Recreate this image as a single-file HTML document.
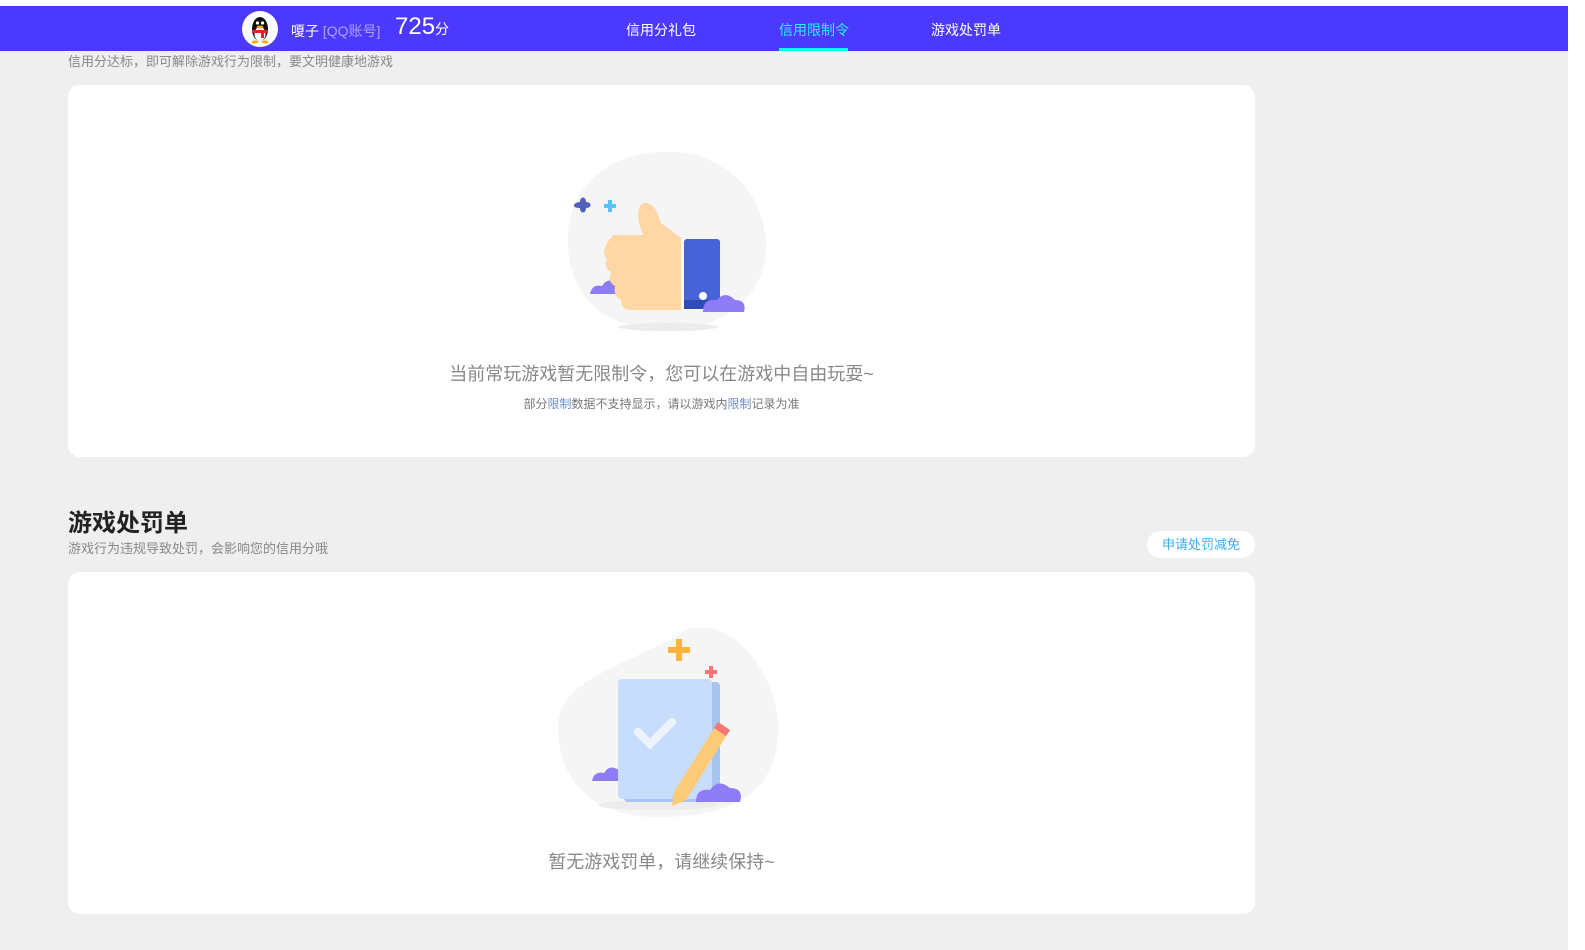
<!DOCTYPE html>
<html><head><meta charset="utf-8"><style>
*{margin:0;padding:0;box-sizing:border-box}
body{width:1585px;height:950px;background:#efefef;font-family:"Liberation Sans","Noto Sans CJK SC",sans-serif;position:relative;overflow:hidden}
.top{position:absolute;left:0;top:0;width:1585px;height:6px;background:#fff}
.rs{position:absolute;right:0;top:0;width:17px;height:950px;background:#fff}
.bar{position:absolute;left:0;top:6px;width:1568px;height:45px;background:#4b39fd;color:#fff}
.abs{position:absolute;white-space:nowrap}
.card{position:absolute;left:68px;width:1187px;background:#fff;border-radius:12px}
</style></head><body>
<div class="top"></div><div class="rs"></div>
<div class="bar">
 <div class="abs" style="left:242px;top:5px;width:36px;height:36px;border-radius:50%;background:#fff">
  <svg width="36" height="36" viewBox="0 0 36 36"><ellipse cx="18" cy="18" rx="8" ry="12" fill="#111"/><ellipse cx="18" cy="23" rx="5.5" ry="7" fill="#fff"/><circle cx="15.5" cy="12" r="1.6" fill="#fff"/><circle cx="20.5" cy="12" r="1.6" fill="#fff"/><ellipse cx="18" cy="16" rx="3.5" ry="1.5" fill="#f5a800"/><rect x="10" y="19" width="16" height="3" fill="#e5222a"/><rect x="19" y="21" width="3" height="6" fill="#e5222a"/><ellipse cx="13" cy="31" rx="3.5" ry="1.5" fill="#f5a800"/><ellipse cx="23" cy="31" rx="3.5" ry="1.5" fill="#f5a800"/></svg>
 </div>
 <div class="abs" style="left:291px;top:15px;font-size:14px">嗄子 <span style="color:#a9a2ff">[QQ账号]</span></div>
 <div class="abs" style="left:395px;top:7px;font-size:24px">725<span style="font-size:14px">分</span></div>
 <div class="abs" style="left:626px;top:14px;font-size:14px">信用分礼包</div>
 <div class="abs" style="left:779px;top:14px;font-size:14px;color:#2ef0ff">信用限制令</div>
 <div class="abs" style="left:779px;top:42px;width:69px;height:3px;background:#18f2ff"></div>
 <div class="abs" style="left:931px;top:14px;font-size:14px">游戏处罚单</div>
</div>
<div class="abs" style="left:68px;top:51px;font-size:13px;color:#888">信用分达标，即可解除游戏行为限制，要文明健康地游戏</div>
<div class="card" style="top:85px;height:372px">
 <svg class="abs" style="left:490px;top:55px" width="220" height="200" viewBox="0 0 220 200">
  <path d="M10 100 C10 40 60 10 110 12 C160 10 210 50 208 110 C206 160 160 190 110 190 C50 190 10 160 10 100Z" fill="#f5f5f5"/>
  <ellipse cx="110" cy="187" rx="50" ry="4" fill="#ececec"/>
  <path d="M16 66 c0-4 6-4 6-4 c0-6 6-6 6 0 c6 0 6 6 0 6 c0 6 -6 6 -6 0 c-6 0 -6 -2 -6 -2z" fill="#5161bc"/>
  <path d="M46 64 h4 v-4 h4 v4 h4 v4 h-4 v4 h-4 v-4 h-4z" fill="#5bc3f7"/>
  <path d="M32 154 q2 -10 12 -8 q6 -10 16 -2 l0 10 h-28z" fill="#8d7cf5"/>
  <path d="M55 95 h30 q-10 -25 0 -32 q12 -2 18 20 l20 15 v72 h-50 q-10 0 -10 -10 q-8 -4 -6 -14 q-8 -4 -4 -14 q-8 -4 -4 -14 q-8 -6 6 -23z" fill="#fed7a5"/>
  <rect x="126" y="99" width="36" height="70" rx="3" fill="#4763d8"/>
  <rect x="126" y="160" width="36" height="9" fill="#2f4bb7"/>
  <circle cx="145" cy="156" r="4" fill="#fff"/>
  <path d="M145 172 q0 -14 14 -12 q8 -10 18 0 q12 0 9 12z" fill="#8d7cf5"/>
 </svg>
 <div class="abs" style="left:0;width:1187px;text-align:center;top:275px;font-size:18px;color:#888">当前常玩游戏暂无限制令，您可以在游戏中自由玩耍~</div>
 <div class="abs" style="left:0;width:1187px;text-align:center;top:310px;font-size:12px;color:#777">部分<span style="color:#6b8ccf">限制</span>数据不支持显示，请以游戏内<span style="color:#6b8ccf">限制</span>记录为准</div>
</div>
<div class="abs" style="left:68px;top:503px;font-size:24px;font-weight:bold;color:#222">游戏处罚单</div>
<div class="abs" style="left:68px;top:538px;font-size:13px;color:#888">游戏行为违规导致处罚，会影响您的信用分哦</div>
<div class="abs" style="left:1147px;top:531px;width:108px;height:27px;border-radius:14px;background:#fff;color:#3aaef0;font-size:13px;text-align:center;line-height:27px">申请处罚减免</div>
<div class="card" style="top:572px;height:342px">
 <svg class="abs" style="left:480px;top:45px" width="240" height="210" viewBox="0 0 240 210">
  <path d="M10 110 C10 60 80 50 140 12 C200 0 235 80 230 120 C225 180 180 200 110 200 C40 200 10 160 10 110Z" fill="#f5f5f5"/>
  <ellipse cx="110" cy="188" rx="60" ry="5" fill="#ececec"/>
  <path d="M120 30 h8 v-8 h6 v8 h8 v6 h-8 v8 h-6 v-8 h-8z" fill="#fdb43c"/>
  <path d="M157 53 h4 v-4 h4 v4 h4 v4 h-4 v4 h-4 v-4 h-4z" fill="#f37676"/>
  <path d="M44 164 q2 -10 12 -8 q6 -10 16 -2 l0 10 h-28z" fill="#8d7cf5"/>
  <rect x="76" y="65" width="96" height="120" rx="4" fill="#a7c4ef"/>
  <rect x="70" y="62" width="94" height="120" rx="4" fill="#c7ddfb"/>
  <path d="M90 115 l12 12 l22 -22" stroke="#eef4ff" stroke-width="8" fill="none" stroke-linecap="round"/>
  <path d="M170 105 l12 8 l-44 70 l-14 6 l2 -14z" fill="#fdcb78"/>
  <path d="M170 105 l12 8 l-4 6 l-12 -8z" fill="#f37676"/>
  <path d="M148 185 q0 -14 14 -12 q8 -12 20 -2 q14 0 10 14z" fill="#8d7cf5"/>
 </svg>
 <div class="abs" style="left:0;width:1187px;text-align:center;top:276px;font-size:18px;color:#888">暂无游戏罚单，请继续保持~</div>
</div>
</body></html>
